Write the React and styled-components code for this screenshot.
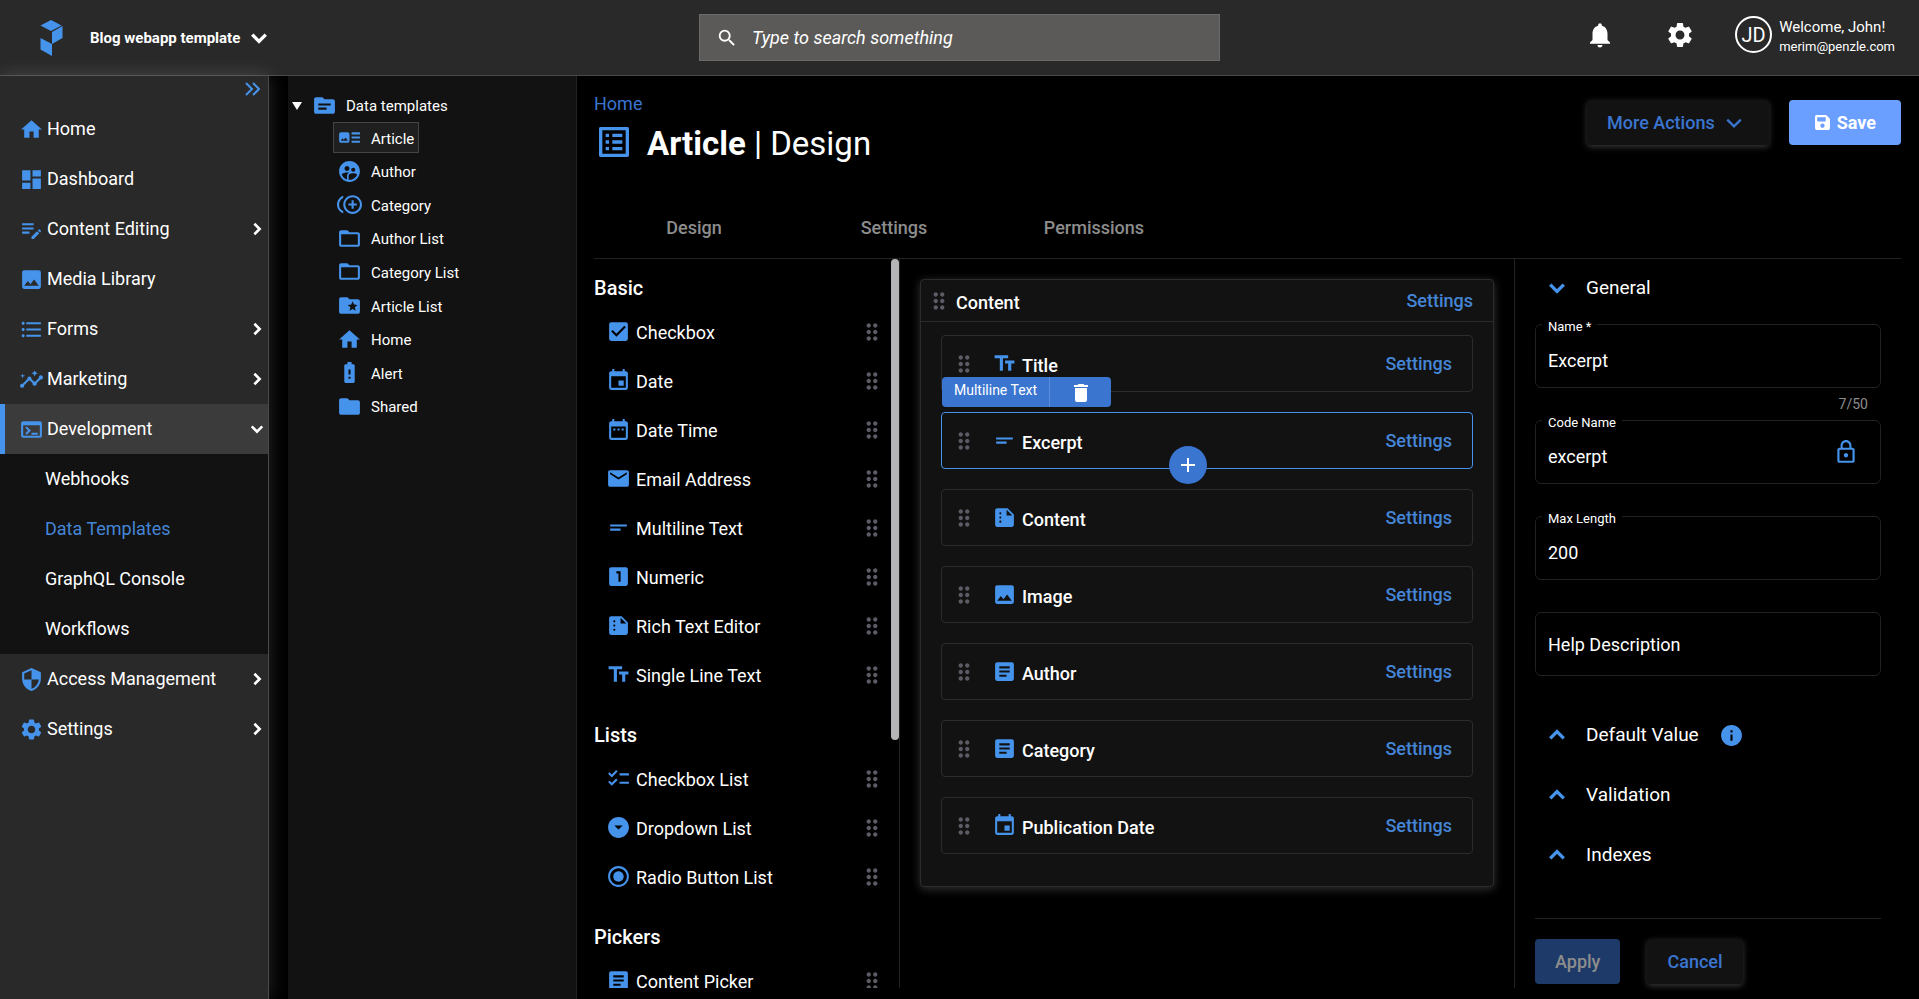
import React from 'react'
import styled, { createGlobalStyle } from 'styled-components'
import {
  MdArrowDropDownCircle,
  MdArticle,
  MdArtTrack,
  MdBatteryAlert,
  MdCheckBox,
  MdChecklist,
  MdControlPointDuplicate,
  MdDashboard,
  MdDateRange,
  MdDelete,
  MdDragIndicator,
  MdEditNote,
  MdEmail,
  MdEvent,
  MdFolder,
  MdFolderOpen,
  MdFolderSpecial,
  MdFormatListBulleted,
  MdHome,
  MdImage,
  MdInfo,
  MdInsights,
  MdListAlt,
  MdLockOutline,
  MdLooksOne,
  MdNotifications,
  MdRadioButtonChecked,
  MdSearch,
  MdSecurity,
  MdSettings,
  MdShortText,
  MdSource,
  MdSummarize,
  MdSupervisedUserCircle,
  MdTerminal,
  MdTextFields,
} from 'react-icons/md'
import { FaSave } from 'react-icons/fa'

const colors = {
  black: '#000000',
  panel: '#121212',
  bar: '#292929',
  active: '#3b3b3b',
  border: '#2c2c2c',
  line: '#222222',
  icon: '#4693ec',
  link: '#4585d6',
  primary: '#3a75d0',
  white: '#ffffff',
  grip: '#5b5c66',
  muted: '#8d8d8d',
}

const menu = [
  { label: 'Home', icon: MdHome },
  { label: 'Dashboard', icon: MdDashboard },
  { label: 'Content Editing', icon: MdEditNote, children: [] },
  { label: 'Media Library', icon: MdImage },
  { label: 'Forms', icon: MdFormatListBulleted, children: [] },
  { label: 'Marketing', icon: MdInsights, children: [] },
  {
    label: 'Development',
    icon: MdTerminal,
    open: true,
    children: ['Webhooks', 'Data Templates', 'GraphQL Console', 'Workflows'],
  },
  { label: 'Access Management', icon: MdSecurity, children: [] },
  { label: 'Settings', icon: MdSettings, children: [] },
]

const templates = [
  { label: 'Article', icon: MdArtTrack, selected: true },
  { label: 'Author', icon: MdSupervisedUserCircle },
  { label: 'Category', icon: MdControlPointDuplicate },
  { label: 'Author List', icon: MdFolderOpen },
  { label: 'Category List', icon: MdFolderOpen },
  { label: 'Article List', icon: MdFolderSpecial },
  { label: 'Home', icon: MdHome },
  { label: 'Alert', icon: MdBatteryAlert },
  { label: 'Shared', icon: MdFolder },
]

const widgets = [
  {
    title: 'Basic',
    items: [
      { label: 'Checkbox', icon: MdCheckBox },
      { label: 'Date', icon: MdEvent },
      { label: 'Date Time', icon: MdDateRange },
      { label: 'Email Address', icon: MdEmail },
      { label: 'Multiline Text', icon: MdShortText },
      { label: 'Numeric', icon: MdLooksOne },
      { label: 'Rich Text Editor', icon: MdSummarize },
      { label: 'Single Line Text', icon: MdTextFields },
    ],
  },
  {
    title: 'Lists',
    items: [
      { label: 'Checkbox List', icon: MdChecklist },
      { label: 'Dropdown List', icon: MdArrowDropDownCircle },
      { label: 'Radio Button List', icon: MdRadioButtonChecked },
    ],
  },
  {
    title: 'Pickers',
    items: [{ label: 'Content Picker', icon: MdArticle }],
  },
]

const fields = [
  { label: 'Title', icon: MdTextFields },
  { label: 'Excerpt', icon: MdShortText, selected: true },
  { label: 'Content', icon: MdSummarize },
  { label: 'Image', icon: MdImage },
  { label: 'Author', icon: MdArticle },
  { label: 'Category', icon: MdArticle },
  { label: 'Publication Date', icon: MdEvent },
]

const chevrons = {
  down: 'M2 5l6 6 6-6',
  up: 'M2 11l6-6 6 6',
  right: 'M5 2l6 6-6 6',
}

const Chevron = ({ to, size = 16, weight = 3 }) => (
  <svg width={size} height={size} viewBox="0 0 16 16" fill="none" aria-hidden="true">
    <path d={chevrons[to]} stroke="currentColor" strokeWidth={weight} />
  </svg>
)

const Logo = () => (
  <svg width="24" height="38" viewBox="0 0 24 38" fill={colors.icon} aria-hidden="true">
    <path d="M0.500 6.500 11 1l10.500 5.500L11 12z" />
    <path d="M12 13 22.500 7v12L12 25z" />
    <path d="M0.500 19l11.500 6v12L0.500 30.500z" />
  </svg>
)

const Header = () => (
  <HeaderBar>
    <Brand>
      <Logo />
      <ProjectButton type="button">
        Blog webapp template
        <Chevron to="down" size={18} />
      </ProjectButton>
    </Brand>
    <SearchBox>
      <MdSearch size={22} />
      <SearchInput type="search" aria-label="Search" placeholder="Type to search something" />
    </SearchBox>
    <HeaderActions>
      <IconButton type="button" aria-label="Notifications">
        <MdNotifications size={30} />
      </IconButton>
      <IconButton type="button" aria-label="Settings">
        <MdSettings size={30} />
      </IconButton>
      <User>
        <Avatar>JD</Avatar>
        <UserText>
          <Welcome>Welcome, John!</Welcome>
          <Email>merim@penzle.com</Email>
        </UserText>
      </User>
    </HeaderActions>
  </HeaderBar>
)

const Sidebar = () => (
  <SidebarNav aria-label="Main">
    <Collapse type="button" aria-label="Toggle menu">
      <svg width="16" height="14" viewBox="0 0 16 14" fill="none" aria-hidden="true">
        <path d="M2 1l6 6-6 6M9 1l6 6-6 6" stroke="currentColor" strokeWidth="2" />
      </svg>
    </Collapse>
    {menu.map(({ label, icon: Icon, children, open }) => (
      <React.Fragment key={label}>
        <MenuItem href="#" $open={open}>
          <Icon size={25} color={colors.icon} />
          <MenuLabel>{label}</MenuLabel>
          {children && <Chevron to={open ? 'down' : 'right'} size={14} />}
        </MenuItem>
        {open && (
          <SubMenu>
            {children.map(child => (
              <SubItem key={child} href="#" $current={child === 'Data Templates'}>
                {child}
              </SubItem>
            ))}
          </SubMenu>
        )}
      </React.Fragment>
    ))}
  </SidebarNav>
)

const Tree = () => (
  <TreePanel>
    <TreeRoot>
      <svg width="10" height="8" viewBox="0 0 10 8" aria-hidden="true">
        <path d="M0 0h10L5 8z" fill={colors.white} />
      </svg>
      <MdSource size={25} color={colors.icon} />
      Data templates
    </TreeRoot>
    <TreeList>
      {templates.map(({ label, icon: Icon, selected }) => (
        <li key={label}>
          <TreeItem href="#" $selected={selected}>
            <Icon size={25} color={colors.icon} />
            <TreeLabel>{label}</TreeLabel>
          </TreeItem>
        </li>
      ))}
    </TreeList>
  </TreePanel>
)

const Widgets = () => (
  <WidgetPane>
    <WidgetScroll>
      {widgets.map(({ title, items }) => (
        <WidgetGroup key={title}>
          <WidgetTitle>{title}</WidgetTitle>
          {items.map(({ label, icon: Icon }) => (
            <Widget key={label}>
              <Icon size={25} color={colors.icon} />
              <WidgetLabel>{label}</WidgetLabel>
              <MdDragIndicator size={26} color={colors.grip} />
            </Widget>
          ))}
        </WidgetGroup>
      ))}
    </WidgetScroll>
    <ScrollTrack>
      <ScrollThumb />
    </ScrollTrack>
  </WidgetPane>
)

const Canvas = () => (
  <CanvasPane>
    <Card>
      <CardHeader>
        <MdDragIndicator size={26} color={colors.grip} />
        <CardTitle>Content</CardTitle>
        <TextLink href="#">Settings</TextLink>
      </CardHeader>
      <CardBody>
        {fields.map(({ label, icon: Icon, selected }) => (
          <Field key={label} $selected={selected}>
            {selected && (
              <FieldTag>
                <TagName>Multiline Text</TagName>
                <TagButton type="button" aria-label="Delete field">
                  <MdDelete size={24} />
                </TagButton>
              </FieldTag>
            )}
            <MdDragIndicator size={26} color={colors.grip} />
            <FieldName>
              <Icon size={25} color={colors.icon} />
              <FieldText>{label}</FieldText>
            </FieldName>
            <TextLink href="#">Settings</TextLink>
            {selected && (
              <AddButton type="button" aria-label="Add field">
                <svg width="14" height="14" viewBox="0 0 14 14" aria-hidden="true">
                  <path d="M7 0v14M0 7h14" stroke="currentColor" strokeWidth="2" />
                </svg>
              </AddButton>
            )}
          </Field>
        ))}
      </CardBody>
    </Card>
  </CanvasPane>
)

const Properties = () => (
  <PropertiesPane>
    <Section type="button">
      <Chevron to="down" size={18} />
      General
    </Section>
    <FieldSet>
      <FieldLabel htmlFor="name">Name *</FieldLabel>
      <TextInput id="name" defaultValue="Excerpt" />
    </FieldSet>
    <Hint>7/50</Hint>
    <FieldSet>
      <FieldLabel htmlFor="code-name">Code Name</FieldLabel>
      <TextInput id="code-name" defaultValue="excerpt" />
      <MdLockOutline size={26} color={colors.icon} />
    </FieldSet>
    <Hint />
    <FieldSet>
      <FieldLabel htmlFor="max-length">Max Length</FieldLabel>
      <TextInput id="max-length" defaultValue="200" />
    </FieldSet>
    <Hint />
    <FieldSet>
      <TextInput $plain aria-label="Help Description" placeholder="Help Description" />
    </FieldSet>
    <Sections>
      <Section type="button">
        <Chevron to="up" size={18} />
        Default Value
        <MdInfo size={25} color={colors.icon} />
      </Section>
      <Section type="button">
        <Chevron to="up" size={18} />
        Validation
      </Section>
      <Section type="button">
        <Chevron to="up" size={18} />
        Indexes
      </Section>
    </Sections>
    <Footer>
      <ApplyButton type="button" disabled>
        Apply
      </ApplyButton>
      <SecondaryButton type="button">Cancel</SecondaryButton>
    </Footer>
  </PropertiesPane>
)

const App = () => (
  <Page>
    <GlobalStyle />
    <Header />
    <Body>
      <Sidebar />
      <Tree />
      <Main>
        <TitleBar>
          <div>
            <Breadcrumb href="#">Home</Breadcrumb>
            <Title>
              <MdListAlt size={40} color={colors.icon} />
              <TitleText>
                <strong>Article</strong> | Design
              </TitleText>
            </Title>
          </div>
          <Actions>
            <MoreButton type="button">
              More Actions
              <Chevron to="down" size={18} weight={2} />
            </MoreButton>
            <SaveButton type="button">
              <FaSave size={17} />
              Save
            </SaveButton>
          </Actions>
        </TitleBar>
        <Tabs>
          <Tab type="button">Design</Tab>
          <Tab type="button">Settings</Tab>
          <Tab type="button">Permissions</Tab>
        </Tabs>
        <Workspace>
          <Widgets />
          <Canvas />
          <Properties />
        </Workspace>
      </Main>
    </Body>
  </Page>
)

export default App

const GlobalStyle = createGlobalStyle`
  *, *::before, *::after {
    box-sizing: border-box;
  }

  body {
    margin: 0;
    background-color: ${colors.black};
    color: ${colors.white};
    font-family: Roboto, 'Liberation Sans', sans-serif;
    font-size: 18px;
    line-height: 24px;
  }

  button, input {
    font: inherit;
    color: inherit;
    border: 0;
    padding: 0;
    background: none;
  }

  a {
    color: inherit;
    text-decoration: none;
  }

  svg {
    display: block;
    flex-shrink: 0;
  }
`

const Page = styled.div`
  display: flex;
  flex-direction: column;
  height: 100vh;
`

const HeaderBar = styled.header`
  display: grid;
  grid-template-columns: 1fr minmax(200px, 521px) 1fr;
  align-items: center;
  height: 76px;
  flex-shrink: 0;
  background-color: ${colors.bar};
  border-bottom: 1px solid #4a4a4a;
`

const Brand = styled.div`
  display: flex;
  align-items: center;
  gap: 26px;
  padding-left: 40px;
`

const ProjectButton = styled.button`
  display: flex;
  align-items: center;
  gap: 10px;
  font-size: 15px;
  font-weight: 700;
`

const SearchBox = styled.label`
  display: flex;
  align-items: center;
  gap: 14px;
  height: 47px;
  padding: 0 16px;
  background-color: #5b5a58;
  border: 1px solid #6a6a6a;
`

const SearchInput = styled.input`
  flex: 1;
  min-width: 0;
  font-style: italic;
  outline: none;

  &::placeholder {
    color: ${colors.white};
    opacity: 1;
  }
`

const HeaderActions = styled.div`
  display: flex;
  align-items: center;
  justify-content: flex-end;
  gap: 50px;
  padding: 0 24px 6px 0;
`

const IconButton = styled.button`
  display: flex;
`

const User = styled.div`
  display: flex;
  align-items: center;
  gap: 7px;
  margin-left: -10px;
`

const Avatar = styled.div`
  display: flex;
  align-items: center;
  justify-content: center;
  width: 37px;
  height: 37px;
  border: 2px solid ${colors.white};
  border-radius: 50%;
  font-size: 20px;
`

const UserText = styled.div`
  padding-top: 4px;
  line-height: 19px;
`

const Welcome = styled.div`
  font-size: 15px;
`

const Email = styled.div`
  font-size: 13px;
`

const Body = styled.div`
  display: flex;
  flex: 1;
  min-height: 0;
`

const SidebarNav = styled.nav`
  position: relative;
  display: flex;
  flex-direction: column;
  width: 269px;
  flex-shrink: 0;
  background-color: ${colors.bar};
  border-right: 1px solid #4a4a4a;
  box-shadow: 0 0 18px rgba(255, 255, 255, 0.16);
`

const Collapse = styled.button`
  display: flex;
  align-items: center;
  justify-content: flex-end;
  height: 28px;
  padding: 0 8px 3px 0;
  color: ${colors.icon};
`

const MenuItem = styled.a`
  display: flex;
  align-items: center;
  gap: 3px;
  height: 50px;
  padding: 0 4px 0 14px;
  background-color: ${({ $open }) => ($open ? colors.active : 'transparent')};
  border-left: 5px solid ${({ $open }) => ($open ? colors.icon : 'transparent')};
`

const MenuLabel = styled.span`
  flex: 1;
`

const SubMenu = styled.div`
  background-color: ${colors.panel};
`

const SubItem = styled.a`
  display: flex;
  align-items: center;
  height: 50px;
  padding-left: 45px;
  color: ${({ $current }) => ($current ? colors.link : colors.white)};
`

const TreePanel = styled.aside`
  width: 289px;
  flex-shrink: 0;
  margin-left: 19px;
  padding-top: 14px;
  background-color: ${colors.panel};
  border-right: 1px solid ${colors.line};
  font-size: 15px;
`

const TreeRoot = styled.div`
  display: flex;
  align-items: center;
  height: 31px;
  padding-left: 4px;

  svg + svg {
    margin: 0 9px 0 10px;
  }
`

const TreeList = styled.ul`
  display: grid;
  grid-auto-rows: 1fr;
  align-items: center;
  height: 302px;
  margin: 0;
  padding: 0 0 0 45px;
  list-style: none;
`

const TreeItem = styled.a`
  display: flex;
  align-items: center;
  gap: 9px;
  width: max-content;
  height: 31px;
  padding: 0 4px 0 3px;
  background-color: ${({ $selected }) => ($selected ? '#1f1f1f' : 'transparent')};
  border: 1px solid ${({ $selected }) => ($selected ? '#444444' : 'transparent')};
`

const TreeLabel = styled.span`
  padding-top: 2px;
`

const Main = styled.main`
  display: flex;
  flex-direction: column;
  flex: 1;
  min-width: 0;
  padding: 16px 18px 11px 17px;
`

const TitleBar = styled.div`
  display: flex;
  justify-content: space-between;
`

const Breadcrumb = styled.a`
  color: ${colors.primary};
`

const Title = styled.h1`
  display: flex;
  align-items: center;
  gap: 13px;
  height: 52px;
  margin: 0;
  font-size: 33px;
  font-weight: 400;
  line-height: 40px;
`

const TitleText = styled.span`
  padding-top: 3px;
`

const Actions = styled.div`
  display: flex;
  align-items: flex-start;
  gap: 20px;
  padding-top: 8px;
`

const Button = styled.button`
  display: flex;
  align-items: center;
  justify-content: center;
  height: 45px;
  padding: 0 20px;
  border-radius: 4px;
  font-weight: 500;
`

const SecondaryButton = styled(Button)`
  background-color: ${colors.panel};
  box-shadow: 0 2px 6px rgba(255, 255, 255, 0.22);
  color: ${colors.primary};
`

const MoreButton = styled(SecondaryButton)`
  gap: 10px;
  padding: 0 26px 0 20px;
`

const SaveButton = styled(Button)`
  gap: 6px;
  padding: 0 25px;
  background-color: #6a9eff;
  font-weight: 700;
`

const ApplyButton = styled(Button)`
  background-color: #1d3a68;
  color: ${colors.muted};
`

const Tabs = styled.div`
  display: flex;
  height: 91px;
  padding-top: 30px;
  border-bottom: 1px solid ${colors.line};
`

const Tab = styled.button`
  width: 200px;
  color: ${colors.muted};
  font-weight: 500;
`

const Workspace = styled.div`
  display: flex;
  flex: 1;
  min-height: 0;
`

const WidgetPane = styled.section`
  display: flex;
  width: 306px;
  flex-shrink: 0;
  border-right: 1px solid ${colors.line};
`

const WidgetScroll = styled.div`
  flex: 1;
  overflow: hidden;
`

const WidgetGroup = styled.div`
  padding-bottom: 7px;
`

const WidgetTitle = styled.h2`
  margin: 0;
  padding: 17px 0 7px;
  font-size: 20px;
  font-weight: 500;
`

const Widget = styled.div`
  display: flex;
  align-items: center;
  gap: 5px;
  height: 49px;
  padding: 0 6px 0 12px;
`

const WidgetLabel = styled.span`
  flex: 1;
  padding-top: 2px;
`

const ScrollTrack = styled.div`
  width: 8px;
`

const ScrollThumb = styled.div`
  height: 66%;
  border-radius: 4px;
  background-color: #b5b5b8;
`

const CanvasPane = styled.section`
  flex: 1;
  min-width: 0;
  padding: 20px;
`

const Card = styled.div`
  background-color: ${colors.panel};
  border: 1px solid ${colors.border};
  border-radius: 4px;
  box-shadow: 0 2px 10px rgba(255, 255, 255, 0.2);
`

const CardHeader = styled.div`
  display: flex;
  align-items: center;
  gap: 4px;
  height: 42px;
  padding: 0 20px 0 5px;
  border-bottom: 1px solid ${colors.border};
`

const CardTitle = styled.h2`
  flex: 1;
  margin: 0;
  padding-top: 4px;
  font-size: 18px;
  font-weight: 500;
`

const TextLink = styled.a`
  color: ${colors.link};
  font-weight: 500;
`

const CardBody = styled.div`
  display: flex;
  flex-direction: column;
  gap: 20px;
  padding: 13px 20px 32px;
`

const Field = styled.div`
  position: relative;
  display: flex;
  align-items: center;
  gap: 15px;
  height: 57px;
  padding: 0 20px 0 9px;
  border: 1px solid ${({ $selected }) => ($selected ? colors.icon : colors.border)};
  border-radius: 4px;
`

const FieldName = styled.div`
  display: flex;
  align-items: center;
  gap: 5px;
  flex: 1;
  font-weight: 500;
`

const FieldText = styled.span`
  padding-top: 4px;
`

const FieldTag = styled.div`
  position: absolute;
  bottom: 100%;
  left: 0;
  display: flex;
  height: 30px;
  margin-bottom: 6px;
  border-radius: 4px;
  background-color: ${colors.primary};
`

const TagName = styled.span`
  padding: 1px 12px;
  font-size: 14px;
`

const TagButton = styled.button`
  display: flex;
  align-items: center;
  justify-content: center;
  width: 62px;
  padding-top: 2px;
  border-left: 1px solid #5a8ddc;
`

const AddButton = styled.button`
  position: absolute;
  bottom: -16px;
  left: 50%;
  z-index: 1;
  display: flex;
  align-items: center;
  justify-content: center;
  width: 38px;
  height: 38px;
  margin-left: -38px;
  border-radius: 50%;
  background-color: ${colors.primary};
`

const PropertiesPane = styled.section`
  display: flex;
  flex-direction: column;
  width: 387px;
  flex-shrink: 0;
  padding: 9px 20px 4px;
  border-left: 1px solid ${colors.line};
`

const Section = styled.button`
  display: flex;
  align-items: center;
  height: 40px;
  padding-left: 13px;
  font-size: 19px;
  text-align: left;

  svg {
    color: ${colors.icon};
    margin-right: 20px;
  }

  svg + svg {
    margin: 0 0 0 20px;
  }
`

const FieldSet = styled.div`
  position: relative;
  display: flex;
  align-items: center;
  height: 64px;
  flex-shrink: 0;
  padding: 0 21px 0 12px;
  border: 1px solid ${colors.line};
  border-radius: 6px;

  &:first-of-type {
    margin-top: 16px;
  }
`

const FieldLabel = styled.label`
  position: absolute;
  top: -8px;
  left: 6px;
  padding: 0 6px;
  background-color: ${colors.black};
  font-size: 13px;
  line-height: 20px;
`

const TextInput = styled.input`
  flex: 1;
  min-width: 0;
  height: 40px;
  margin-top: ${({ $plain }) => ($plain ? 0 : '8px')};
  outline: none;

  &::placeholder {
    color: ${colors.white};
    opacity: 1;
  }
`

const Hint = styled.div`
  height: 32px;
  flex-shrink: 0;
  padding: 0 13px;
  color: ${colors.muted};
  font-size: 14px;
  line-height: 32px;
  text-align: right;
`

const Sections = styled.div`
  display: flex;
  flex-direction: column;
  gap: 20px;
  padding-top: 39px;
`

const Footer = styled.div`
  display: flex;
  gap: 27px;
  margin-top: auto;
  padding-top: 20px;
  border-top: 1px solid ${colors.line};
`
